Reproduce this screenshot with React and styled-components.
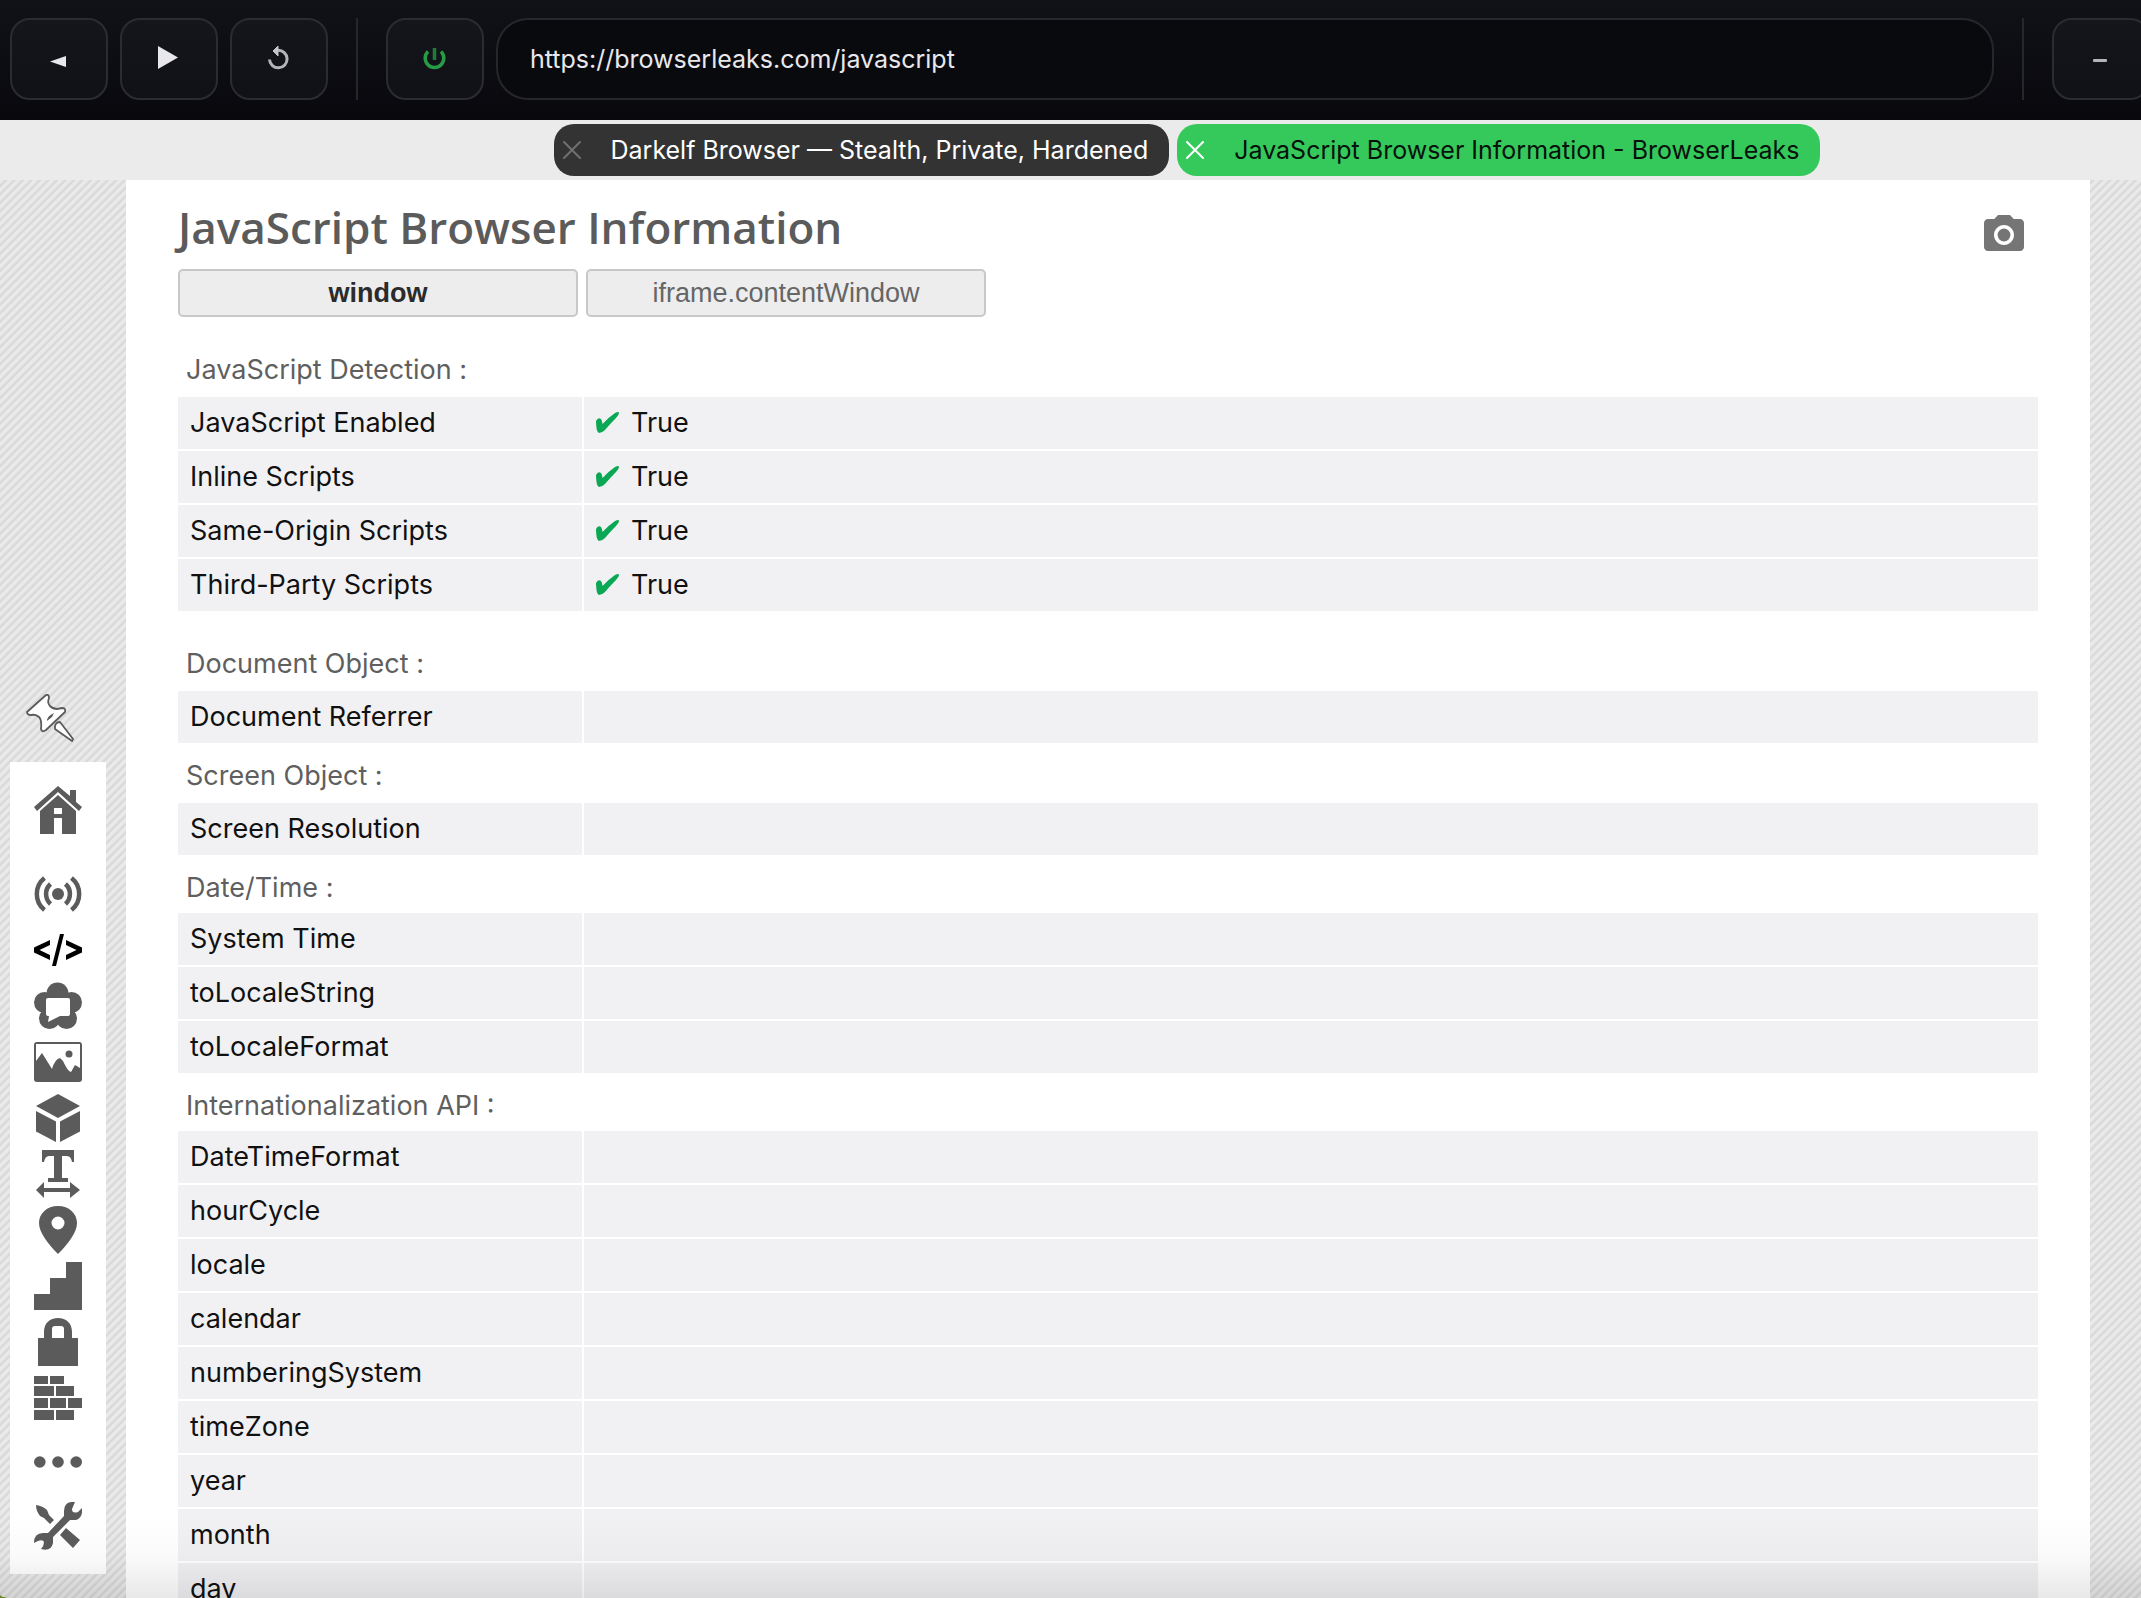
import React from "react";
import styled, { createGlobalStyle } from "styled-components";
import { MdCameraAlt } from "react-icons/md";

const ui = `Inter, "Liberation Sans", sans-serif`;

const GlobalStyle = createGlobalStyle`
  * { box-sizing: border-box; }
  body { margin: 0; font-family: ${ui}; background: #6f8a2e; }
  button, input { font-family: inherit; }
`;

const Window = styled.div`
  display: flex;
  flex-direction: column;
  height: 100vh;
  overflow: hidden;
  background: #ebebeb;
  border-radius: 0 0 0 12px / 0 0 0 4px;
`;

const Toolbar = styled.header`
  display: flex;
  flex: none;
  gap: 12px;
  height: 120px;
  padding: 18px 0 20px 10px;
  overflow: hidden;
  background: linear-gradient(#111217, #08080d);
`;

const ToolButton = styled.button`
  display: grid;
  place-items: center;
  flex: none;
  width: 98px;
  padding: 0;
  border: 2px solid #2b2c31;
  border-radius: 20px;
  background: linear-gradient(#15161b, #101116);
`;

const Separator = styled.span`
  flex: none;
  width: 2px;
  margin: 0 16px;
  background: #26272b;
`;

const Address = styled.input`
  flex: 1;
  min-width: 0;
  padding: 0 32px;
  border: 2px solid #26272b;
  border-radius: 32px;
  background: #090a0e;
  color: #e8e8ec;
  font-size: 25px;
`;

const WindowControls = styled.div`
  display: flex;
  flex: none;
  width: 89px;
  overflow: hidden;
`;

const TabBar = styled.nav`
  display: flex;
  flex: none;
  justify-content: center;
  gap: 8px;
  height: 60px;
  padding: 4px 0 4px 233px;
`;

const Tab = styled.div`
  display: flex;
  align-items: center;
  gap: 30px;
  padding: 0 21px 0 9px;
  border-radius: 20px;
  background: ${(p) => (p.$active ? "#35c95b" : "#333333")};
  color: ${(p) => (p.$active ? "#08120b" : "#ffffff")};
  font-size: 25px;
  white-space: nowrap;
`;

const CloseButton = styled.button`
  display: flex;
  padding: 0;
  border: 0;
  background: none;
  color: ${(p) => (p.$active ? "#ffffff" : "#707070")};
`;

const Body = styled.div`
  display: grid;
  grid-template-columns: 126px 1fr 51px;
  flex: 1;
  min-height: 0;
  overflow: hidden;
  position: relative;
  background: repeating-linear-gradient(135deg, #eaeaea 0 2px, #d9d9d9 4px 5px, #eaeaea 6px);
  &::after {
    content: "";
    position: absolute;
    inset: auto 0 0 0;
    height: 84px;
    pointer-events: none;
    background: linear-gradient(rgba(0, 0, 0, 0), rgba(0, 0, 0, 0.02) 50%, rgba(0, 0, 0, 0.09));
  }
`;

const Side = styled.aside`
  display: flex;
  flex-direction: column;
  justify-content: flex-end;
  align-items: flex-start;
  gap: 20px;
  padding: 0 0 24px 10px;
  min-height: 0;
`;

const PinButton = styled.button`
  display: flex;
  margin-left: 16px;
  padding: 0;
  border: 0;
  background: none;
`;

const Menu = styled.nav`
  display: flex;
  flex-direction: column;
  align-items: center;
  gap: 8px;
  width: 96px;
  padding: 24px 0;
  background: #ffffff;
`;

const MenuLink = styled.a`
  display: flex;
  color: ${(p) => (p.$active ? "#000000" : "#5b5b5b")};
  margin: ${(p) => p.$margin || "0"};
`;

const Main = styled.main`
  min-width: 0;
  overflow: hidden;
  padding: 17px 52px 0;
  background: #ffffff;
`;

const Heading = styled.div`
  display: flex;
  justify-content: space-between;
  align-items: flex-start;
  height: 69px;
  padding-right: 10px;
`;

const Title = styled.h1`
  margin: 0;
  color: #5b5b5b;
  font: 600 44px/60px "Open Sans", sans-serif;
`;

const Shot = styled.button`
  display: flex;
  padding: 14px 0 0;
  border: 0;
  background: none;
  color: #757575;
`;

const Switch = styled.div`
  display: flex;
  gap: 8px;
  margin: 3px 0 22px;
`;

const SwitchButton = styled.button`
  width: 400px;
  height: 48px;
  padding: 0;
  border: 2px solid #c8c8c8;
  border-radius: 5px;
  background: #ededed;
  color: ${(p) => (p.$active ? "#2b2b2b" : "#666666")};
  font: ${(p) => (p.$active ? 700 : 400)} 27px/40px "Liberation Sans", Arial, sans-serif;
`;

const Table = styled.table`
  width: 100%;
  table-layout: fixed;
  border-collapse: separate;
  border-spacing: 0;
  margin-bottom: ${(p) => (p.$spaced ? "20px" : "0")};
`;

const Caption = styled.caption`
  padding: ${(p) => (p.$short ? "6px" : "4px")} 8px 0;
  color: #5f5f5f;
  text-align: left;
  font-size: 27px;
  line-height: ${(p) => (p.$short ? "50px" : "54px")};
`;

const cell = `
  height: 54px;
  padding: 0 12px;
  border-bottom: 2px solid #ffffff;
  background: #f1f1f4;
  text-align: left;
  font-size: 27px;
  font-weight: 400;
  line-height: 52px;
  color: #111111;
`;

const Label = styled.th`
  ${cell}
  width: 406px;
  border-right: 2px solid #ffffff;
`;

const Value = styled.td`
  ${cell}
`;

const Flag = styled.span`
  display: flex;
  align-items: center;
  gap: 12px;
`;

const Svg = ({ size = 48, children, ...rest }) => (
  <svg width={size} height={size} viewBox="0 0 48 48" fill="currentColor" aria-hidden="true" {...rest}>
    {children}
  </svg>
);

const menu = [
  { name: "Home", margin: "0 0 28px", icon: <><path d="M24 0 36 10V4h6v12l6 5-3 4L24 6 3 25l-3-4Z" /><path fillRule="evenodd" d="M24 9 42 25v23H28V32h-8v16H6V25ZM20 22v6h8v-6Z" /></> },
  { name: "IP Address", icon: <><circle cx="24" cy="24" r="6" /><g fill="none" stroke="currentColor" strokeWidth="4.500"><path d="M16.500 14a13.500 13.500 0 0 0 0 20M31.500 14a13.500 13.500 0 0 1 0 20" /><path d="M10.500 8a20.500 20.500 0 0 0 0 32M37.500 8a20.500 20.500 0 0 1 0 32" /></g></> },
  { name: "JavaScript", active: true, icon: <path d="M16 14v5L5.500 24 16 29v5L0 26.500v-5ZM32 14v5l10.500 5L32 29v5l16-7.500v-5ZM26 8h4l-8 32h-4Z" /> },
  { name: "WebRTC", icon: <><g><circle cx="23.500" cy="11.500" r="11" /><circle cx="10.500" cy="20.500" r="10.500" /><circle cx="37.500" cy="20.500" r="10.500" /><circle cx="15.500" cy="36.500" r="10.500" /><circle cx="32.500" cy="36.500" r="10.500" /><circle cx="24" cy="27" r="11" /></g><path fill="#fff" d="M14 16h20q2 0 2 2v14q0 2-2 2h-8l-12 6 1-6h-1q-2 0-2-2V18q0-2 2-2Z" /></> },
  { name: "Canvas", icon: <><path fillRule="evenodd" d="M3 4h42q3 0 3 3v34q0 3-3 3H3q-3 0-3-3V7q0-3 3-3Zm-1 19 6-8 10 16q3-10 8-11 3 2 5 7 3 6 6 7l4-7 5 3V6H2Z" /><circle cx="35" cy="16" r="3.500" /></> },
  { name: "WebGL", icon: <path d="M24 0 46 12 24 24 2 12ZM2 17l20 10.500V48L2 37.500ZM46 17 26 27.500V48l20-10.500Z" /> },
  { name: "Fonts", icon: <path d="M8 0h32v12h-2q-1-6-5-6h-5v22h6v4H14v-4h6V6h-5q-4 0-5 6H8ZM10 32v6h26v-6l10 8-10 8v-6H10v6L2 40Z" /> },
  { name: "Geolocation", icon: <path fillRule="evenodd" d="M24 0c11 0 19 7.500 19 17S34 38 24 48C14 38 5 26.500 5 17S13 0 24 0Zm0 10.500a6.500 6.500 0 1 0 0 13 6.500 6.500 0 0 0 0-13Z" /> },
  { name: "Features", icon: <path d="M32 0h16v48H0V32h16V16h16Z" /> },
  { name: "TLS", icon: <path fillRule="evenodd" d="M10 20V14C10 5 16 0 24 0s14 5 14 14v6h6v28H4V20Zm8 0h12v-9q0-3-3-3h-6q-3 0-3 3Z" /> },
  { name: "Content Filters", margin: "0 0 8px", icon: <path d="M0 2h14v8H0ZM16 2h14v8H16ZM0 12h20v10H0ZM22 12h18v10H22ZM0 24h14v10H0ZM16 24h16v10H16ZM34 24h14v10H34ZM0 36h20v10H0ZM22 36h18v10H22Z" /> },
  { name: "More", margin: "0 0 8px", icon: <><circle cx="5.800" cy="24" r="5.800" /><circle cx="24" cy="24" r="5.800" /><circle cx="42.200" cy="24" r="5.800" /></> },
  { name: "Tools", icon: <><path d="M2 3q7 1 11 5l2 5 5 5-4 4-6-6-4-2Q2 9 2 3ZM32 26 46 38l-7 8-13-13Z" /><path d="M41 0q-11-1-11 9v5L14 31H9Q0 31 0 41l4-2q5-2 6 1 0 4-3 7 10 3 12-6v-6l17-17h6q7-2 6-12l-4 4q-6 2-6-3Z" /></> },
];

const groups = [
  { title: "JavaScript Detection :", spaced: true, checked: true, rows: ["JavaScript Enabled", "Inline Scripts", "Same-Origin Scripts", "Third-Party Scripts"] },
  { title: "Document Object :", rows: ["Document Referrer"] },
  { title: "Screen Object :", rows: ["Screen Resolution"] },
  { title: "Date/Time :", short: true, rows: ["System Time", "toLocaleString", "toLocaleFormat"] },
  { title: "Internationalization API :", short: true, rows: ["DateTimeFormat", "hourCycle", "locale", "calendar", "numberingSystem", "timeZone", "year", "month", "day"] },
];

const Close = ({ active }) => (
  <CloseButton $active={active} aria-label="Close tab">
    <svg width="18" height="20" viewBox="0 0 18 20" fill="none" stroke="currentColor" strokeWidth="2" strokeLinecap="round"><path d="m1 2 16 16M17 2 1 18" /></svg>
  </CloseButton>
);

const Check = () => (
  <svg width="23" height="22" viewBox="0 0 23 22" fill="#0aa854" aria-hidden="true">
    <path d="M0 9q2-4 5-2 1 1 1.500 5Q13 5 19 1q4-2 4 0 0 2-3 5-6 6-11 12-3 3-6 3-2-1-2.500-5Q0 12 0 9Z" />
  </svg>
);

export default function App() {
  return (
    <>
      <GlobalStyle />
      <Window>
        <Toolbar>
          <ToolButton aria-label="Back"><Svg fill="#e8e8ec"><path d="m15 26.500 16-5.500v11Z" /></Svg></ToolButton>
          <ToolButton aria-label="Forward"><Svg fill="#e8e8ec"><path d="M13 11v23L33 22.500Z" /></Svg></ToolButton>
          <ToolButton aria-label="Reload">
            <Svg fill="#c4c4c9"><path fill="none" stroke="#b4b5ba" strokeWidth="3" d="M14.500 24.500a8.800 8.800 0 1 0 8.500-9.300" /><path d="M23 11v10l-5-5Z" stroke="#c4c4c9" strokeLinejoin="round" /></Svg>
          </ToolButton>
          <Separator />
          <ToolButton aria-label="Stealth mode">
            <Svg fill="none" strokeWidth="3.500"><path stroke="#279c46" d="M17 16.500a9.300 9.300 0 1 0 13 0" /><path stroke="#207a39" d="M23.500 13v12" /></Svg>
          </ToolButton>
          <Address aria-label="Address" defaultValue="https://browserleaks.com/javascript" />
          <Separator />
          <WindowControls>
            <ToolButton aria-label="Minimize"><Svg fill="#b4b5ba"><rect x="16" y="24" width="14" height="3" rx="1" /></Svg></ToolButton>
          </WindowControls>
        </Toolbar>
        <TabBar>
          <Tab><Close />Darkelf Browser — Stealth, Private, Hardened</Tab>
          <Tab $active><Close active />JavaScript Browser Information - BrowserLeaks</Tab>
        </TabBar>
        <Body>
          <Side>
            <PinButton aria-label="Pin menu">
              <Svg fill="#fff" stroke="#5b5b5b" strokeWidth="1.800" strokeLinejoin="round">
                <path d="M20 1q3-1 3 3-2 5 1 8 3 3 7 3l5-1q4 0 3 4L20 36q-4 3-5-1 1-9-2-12-3-3-8-2-4 0-4-3Z" /><path d="M21 27q0-5 7-8l-2 4Z" fill="#5b5b5b" stroke="none" /><path d="M29 32q1-4 5-4l13 17-1 2-17-12Z" />
              </Svg>
            </PinButton>
            <Menu>
              {menu.map((m) => (
                <MenuLink key={m.name} href="#" aria-label={m.name} $active={m.active} $margin={m.margin}><Svg>{m.icon}</Svg></MenuLink>
              ))}
            </Menu>
          </Side>
          <Main>
            <Heading>
              <Title>JavaScript Browser Information</Title>
              <Shot aria-label="Take screenshot"><MdCameraAlt size={48} /></Shot>
            </Heading>
            <Switch>
              <SwitchButton $active>window</SwitchButton>
              <SwitchButton>iframe.contentWindow</SwitchButton>
            </Switch>
            {groups.map((g) => (
              <Table key={g.title} $spaced={g.spaced}>
                <Caption $short={g.short}>{g.title}</Caption>
                <tbody>
                  {g.rows.map((r) => (
                    <tr key={r}>
                      <Label scope="row">{r}</Label>
                      <Value>{g.checked && <Flag><Check />True</Flag>}</Value>
                    </tr>
                  ))}
                </tbody>
              </Table>
            ))}
          </Main>
        </Body>
      </Window>
    </>
  );
}
